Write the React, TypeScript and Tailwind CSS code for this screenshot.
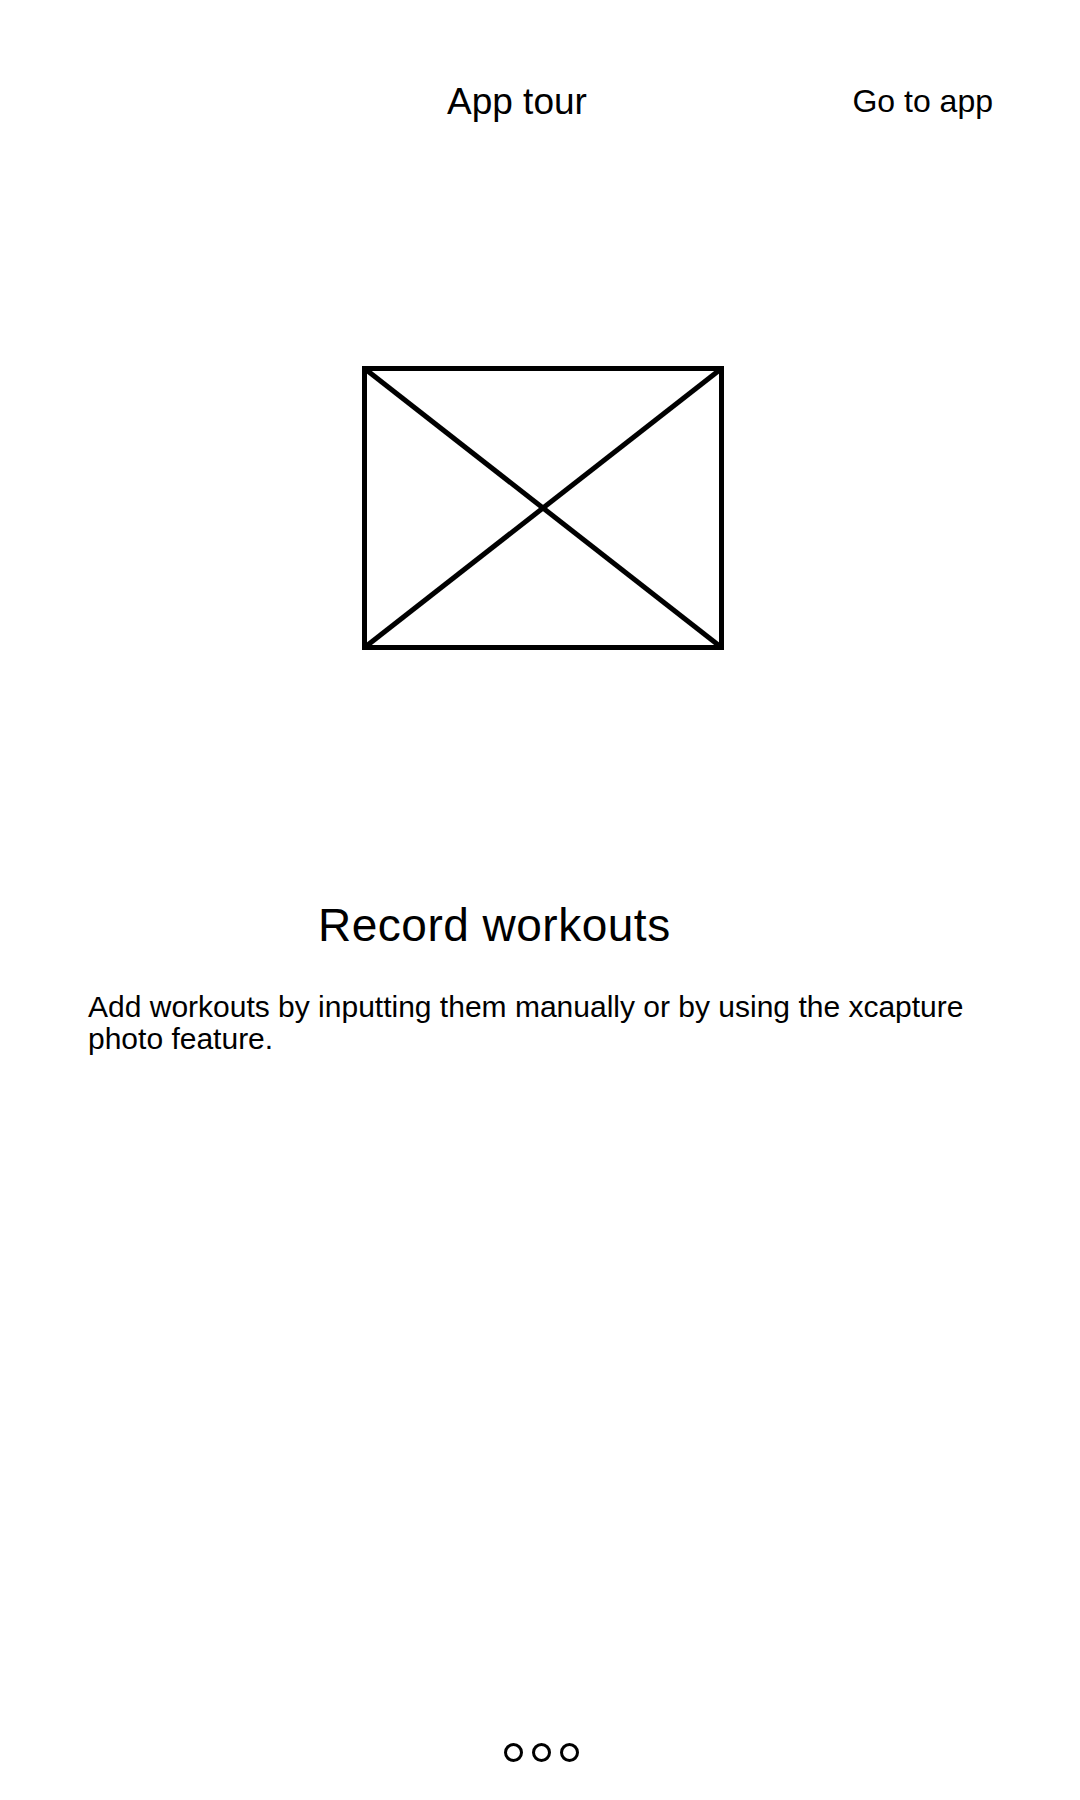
const FONT = "font-['Liberation_Sans',Arial,sans-serif]";

function Placeholder() {
  return (
    <svg width="362" height="284" viewBox="0 0 362 284" className="block">
      <rect x="2.5" y="2.5" width="357" height="279" fill="none" stroke="#000" strokeWidth="5" />
      <line x1="2.5" y1="2.5" x2="359.5" y2="281.5" stroke="#000" strokeWidth="5" />
      <line x1="359.5" y1="2.5" x2="2.5" y2="281.5" stroke="#000" strokeWidth="5" />
    </svg>
  );
}

function PageDots({ count }: { count: number }) {
  return (
    <div className="flex justify-center gap-[9px] pl-[2px]">
      {Array.from({ length: count }).map((_, i) => (
        <span
          key={i}
          className="block h-[19px] w-[19px] rounded-full border-[3px] border-black"
        />
      ))}
    </div>
  );
}

export default function App() {
  return (
    <div className={`flex h-[1800px] w-[1080px] flex-col bg-white text-black ${FONT}`}>
      <header className="flex items-start">
        <h1 className="ml-[447px] mt-[83px] text-[37px] leading-none font-normal">App tour</h1>
        <button type="button" className="ml-auto mr-[87px] mt-[85px] text-[32px] leading-none">
          Go to app
        </button>
      </header>

      <div className="ml-[362px] mt-[246px]">
        <Placeholder />
      </div>

      <h2 className="ml-[318px] mt-[252px] text-[46px] leading-none font-normal tracking-[0.5px]">
        Record workouts
      </h2>

      <p className="ml-[88px] mt-[43px] max-w-[920px] text-[30px] leading-[32px]">
        Add workouts by inputting them manually or by using the xcapture photo feature.
      </p>

      <div className="mt-auto pb-[38px]">
        <PageDots count={3} />
      </div>
    </div>
  );
}
